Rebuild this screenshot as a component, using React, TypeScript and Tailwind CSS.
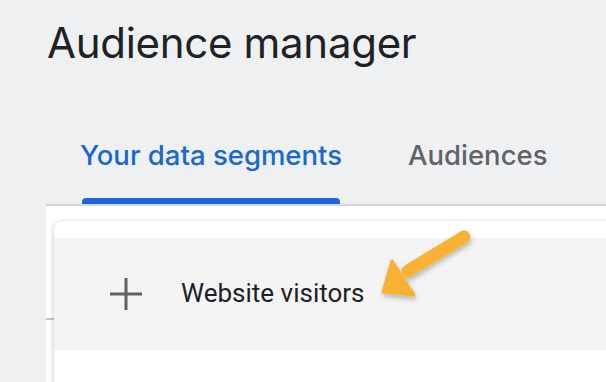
import React from 'react'

function Arrow() {
  return (
    <svg
      className="absolute left-[360px] top-[215px]"
      width="130"
      height="100"
      viewBox="0 0 130 100"
    >
      <defs>
        <filter id="arrowShadow" x="-30%" y="-30%" width="160%" height="160%">
          <feDropShadow dx="1" dy="3" stdDeviation="2.5" floodColor="#000" floodOpacity="0.25" />
        </filter>
      </defs>
      <g filter="url(#arrowShadow)" fill="#f8b133" stroke="#f8b133">
        <line x1="104" y1="22" x2="48" y2="56" strokeWidth="13" strokeLinecap="round" />
        <polygon points="23,77 32,46 54,80" strokeWidth="3" strokeLinejoin="round" />
      </g>
    </svg>
  )
}

export default function App() {
  return (
    <div className="relative h-[382px] w-[606px] overflow-hidden bg-[#eff0f2]">
      <h1
        className="pl-[47px] pt-[22px] text-[42px] leading-none font-normal tracking-[-0.3px] text-[#202124]"
        style={{ fontFamily: 'Inter, Roboto, sans-serif' }}
      >
        Audience manager
      </h1>

      {/* Tabs */}
      <div
        className="mt-[78px] flex gap-[66px] pl-[80px] text-[27.5px] leading-none font-medium"
        style={{ fontFamily: 'Inter, Roboto, sans-serif' }}
      >
        <div className="flex flex-col">
          <span className="text-[#1967d2]">Your data segments</span>
          <div className="mx-[2px] mt-[28px] h-[6px] rounded-t-[4px] bg-[#1b66d9]" />
        </div>
        <span className="text-[#5f6368]">Audiences</span>
      </div>

      {/* Panel */}
      <div className="ml-[46px] flex h-[200px] border-t-2 border-[#d6d7d9] bg-white pt-[15px]">
        <div className="w-[8px] pt-[97px]">
          <div className="h-[2px] bg-[#c4c4c4]" />
        </div>
        <div className="flex-1 rounded-tl-[8px] bg-white pt-[17px] shadow-[0_1px_5px_rgba(0,0,0,0.25)]">
          <div className="flex h-[112px] items-center bg-[#f4f4f4] pl-[56px]">
            <svg width="32" height="32" viewBox="0 0 32 32" className="mr-[39px]">
              <rect x="0" y="14.5" width="32" height="3" fill="#616161" />
              <rect x="14.5" y="0" width="3" height="32" fill="#616161" />
            </svg>
            <span
              className="text-[26px] text-[#202124]"
              style={{ fontFamily: 'Roboto, sans-serif' }}
            >
              Website visitors
            </span>
          </div>
        </div>
      </div>

      <Arrow />
    </div>
  )
}
